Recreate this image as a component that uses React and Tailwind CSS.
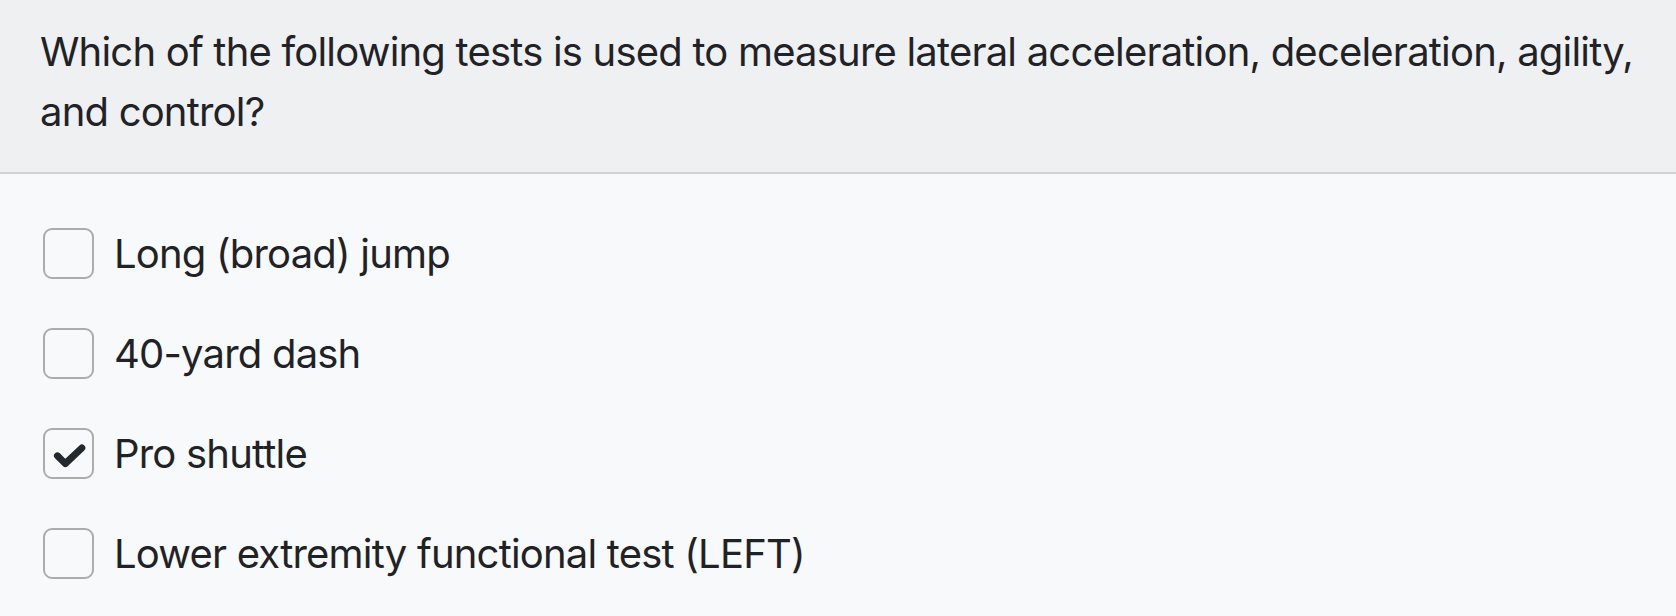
import React, { useState } from "react";

const options = [
  { id: "long-jump", label: "Long (broad) jump" },
  { id: "dash", label: "40-yard dash" },
  { id: "shuttle", label: "Pro shuttle" },
  { id: "lower", label: "Lower extremity functional test (LEFT)" }
];

function CheckBox({ checked }) {
  return (
    <span className="flex h-[51px] w-[51px] shrink-0 items-center justify-center rounded-[9px] border-2 border-[#acacac] bg-[#f8f9fa]">
      {checked && (
        <svg width="51" height="51" viewBox="0 0 51 51" fill="none">
          <path
            d="M13.5 28 L22 36.5 L40 19.5"
            stroke="#24292f"
            strokeWidth="7.5"
            strokeLinecap="round"
            strokeLinejoin="round"
          />
        </svg>
      )}
    </span>
  );
}

export default function App() {
  const [selected, setSelected] = useState(["shuttle"]);

  const toggle = (id) => {
    setSelected((prev) =>
      prev.includes(id) ? prev.filter((x) => x !== id) : [...prev, id]
    );
  };

  return (
    <div
      className="min-h-[616px] w-full bg-[#f8f9fa] text-[#1f2328]"
      style={{ fontFamily: "Inter, 'Noto Sans', sans-serif" }}
    >
      {/* question */}
      <div className="border-b-2 border-[#d0d1d3] bg-[#eff0f2] px-[40px] pt-[22px] pb-[30px]">
        <p className="text-[40px] leading-[60px] tracking-[-0.8px]">
          Which of the following tests is used to measure lateral acceleration, deceleration, agility,
          and control?
        </p>
      </div>

      {/* answers */}
      <div className="flex flex-col gap-[49px] px-[43px] pt-[54px]">
        {options.map((opt) => (
          <label
            key={opt.id}
            className="flex h-[51px] cursor-pointer items-center gap-[20px]"
            onClick={() => toggle(opt.id)}
          >
            <CheckBox checked={selected.includes(opt.id)} />
            <span className="text-[40px] leading-[51px] tracking-[-0.8px]">{opt.label}</span>
          </label>
        ))}
      </div>
    </div>
  );
}
